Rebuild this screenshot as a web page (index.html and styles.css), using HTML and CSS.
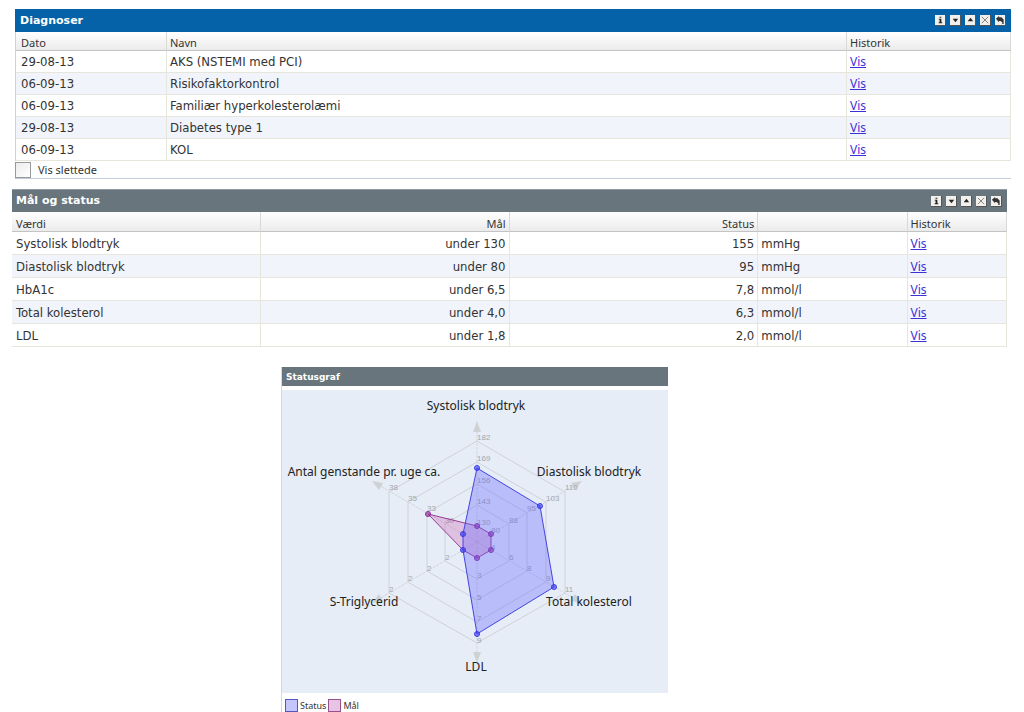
FILE: index.html
```html
<!DOCTYPE html>
<html lang="da">
<head>
<meta charset="utf-8">
<meta name="viewport" content="width=device-width, initial-scale=1">
<title>Diagnoser og status</title>
<link rel="stylesheet" href="styles.css">
</head>
<body>
<svg class="symbols" aria-hidden="true">
  <symbol id="i-info" viewBox="0 0 11 11"><path d="M5 2h2v1H5zM4 4h3v4h1v1H4V8h1V5H4z" fill="#222"/></symbol>
  <symbol id="i-down" viewBox="0 0 11 11"><path d="M3 4h6L6 8z" fill="#222"/></symbol>
  <symbol id="i-up" viewBox="0 0 11 11"><path d="M3 7h6L6 3z" fill="#222"/></symbol>
  <symbol id="i-close" viewBox="0 0 11 11"><path d="M2 2l7 7M9 2L2 9" stroke="#777" fill="none"/></symbol>
  <symbol id="i-back" viewBox="0 0 11 11"><path d="M1 4L4.500 1v1.500H7L9.500 5v5H8V8L6 6.500H4.500V8z" fill="#333"/></symbol>
</svg>

<main class="page">
  <section class="panel diagnoses">
    <header class="bar bar-blue">
      <h2>Diagnoser</h2>
      <div class="tools">
        <button type="button" aria-label="Info"><svg><use href="#i-info"/></svg></button>
        <button type="button" aria-label="Ned"><svg><use href="#i-down"/></svg></button>
        <button type="button" aria-label="Op"><svg><use href="#i-up"/></svg></button>
        <button type="button" aria-label="Luk"><svg><use href="#i-close"/></svg></button>
        <button type="button" aria-label="Tilbage"><svg><use href="#i-back"/></svg></button>
      </div>
    </header>
    <table>
      <colgroup><col class="d-date"><col class="d-name"><col class="d-hist"></colgroup>
      <thead><tr><th>Dato</th><th>Navn</th><th>Historik</th></tr></thead>
      <tbody>
        <tr><td>29-08-13</td><td>AKS (NSTEMI med PCI)</td><td><a href="#">Vis</a></td></tr>
        <tr><td>06-09-13</td><td>Risikofaktorkontrol</td><td><a href="#">Vis</a></td></tr>
        <tr><td>06-09-13</td><td>Familiær hyperkolesterolæmi</td><td><a href="#">Vis</a></td></tr>
        <tr><td>29-08-13</td><td>Diabetes type 1</td><td><a href="#">Vis</a></td></tr>
        <tr><td>06-09-13</td><td>KOL</td><td><a href="#">Vis</a></td></tr>
      </tbody>
    </table>
    <label class="deleted"><input type="checkbox">Vis slettede</label>
  </section>

  <section class="panel goals">
    <header class="bar bar-grey">
      <h2>Mål og status</h2>
      <div class="tools">
        <button type="button" aria-label="Info"><svg><use href="#i-info"/></svg></button>
        <button type="button" aria-label="Ned"><svg><use href="#i-down"/></svg></button>
        <button type="button" aria-label="Op"><svg><use href="#i-up"/></svg></button>
        <button type="button" aria-label="Luk"><svg><use href="#i-close"/></svg></button>
        <button type="button" aria-label="Tilbage"><svg><use href="#i-back"/></svg></button>
      </div>
    </header>
    <table>
      <colgroup><col class="g-value"><col class="g-goal"><col class="g-status"><col class="g-unit"><col class="g-hist"></colgroup>
      <thead><tr><th>Værdi</th><th class="num">Mål</th><th class="num">Status</th><th></th><th>Historik</th></tr></thead>
      <tbody>
        <tr><td>Systolisk blodtryk</td><td class="num">under 130</td><td class="num">155</td><td>mmHg</td><td><a href="#">Vis</a></td></tr>
        <tr><td>Diastolisk blodtryk</td><td class="num">under 80</td><td class="num">95</td><td>mmHg</td><td><a href="#">Vis</a></td></tr>
        <tr><td>HbA1c</td><td class="num">under 6,5</td><td class="num">7,8</td><td>mmol/l</td><td><a href="#">Vis</a></td></tr>
        <tr><td>Total kolesterol</td><td class="num">under 4,0</td><td class="num">6,3</td><td>mmol/l</td><td><a href="#">Vis</a></td></tr>
        <tr><td>LDL</td><td class="num">under 1,8</td><td class="num">2,0</td><td>mmol/l</td><td><a href="#">Vis</a></td></tr>
      </tbody>
    </table>
  </section>

  <section class="graph">
    <header class="bar bar-small"><h2>Statusgraf</h2></header>
    <svg class="radar" viewBox="0 0 386 303" role="img" aria-label="Statusgraf">
      <g class="grid">
        <path d="M195 51L283 102V203L195 253L107 203V102Z"/>
        <path d="M195 72L264 112V192L195 232L126 192V112Z"/>
        <path d="M195 94L245 123V181L195 210L145 181V123Z"/>
        <path d="M195 115L227 134V171L195 189L163 171V134Z"/>
        <path class="axis" d="M195 152V36M195 152L295 94M195 152L295 210M195 152V268M195 152L95 210M195 152L95 94"/>
      </g>
      <g class="arrows">
        <path d="M195 31l4 11h-8z"/><path d="M195 273l4-11h-8z"/>
        <path d="M300 91l-11 2 4 7z"/><path d="M300 213l-11-2 4-7z"/>
        <path d="M90 91l11 2-4 7z"/><path d="M90 213l11-2-4-7z"/>
      </g>
      <g class="ticks">
        <text x="195" y="50">182</text><text x="195" y="71">169</text><text x="195" y="93">156</text><text x="195" y="114">143</text><text x="195" y="135">130</text>
        <text x="283" y="100">110</text><text x="264" y="111">103</text><text x="245" y="121">95</text><text x="227" y="133">88</text><text x="209" y="143">80</text>
        <text x="283" y="202">11</text><text x="264" y="191">9</text><text x="245" y="181">8</text><text x="227" y="170">6</text><text x="209" y="160">4</text>
        <text x="195" y="253">9</text><text x="195" y="231">7</text><text x="195" y="210">5</text><text x="195" y="188">3</text>
        <text x="107" y="202">2</text><text x="126" y="191">2</text><text x="145" y="181">2</text><text x="163" y="170">2</text>
        <text x="107" y="100">38</text><text x="126" y="111">35</text><text x="145" y="121">33</text><text x="163" y="133">30</text>
      </g>
      <g class="goal">
        <path d="M195 136L209 144V160L195 168L181 160L146 124Z"/>
        <circle cx="195" cy="136" r="2.500"/><circle cx="209" cy="144" r="2.500"/><circle cx="209" cy="160" r="2.500"/><circle cx="195" cy="168" r="2.500"/><circle cx="146" cy="124" r="2.500"/>
      </g>
      <g class="status">
        <path d="M195 78L258 116L272 197L195 244L181 160V144Z"/>
        <circle cx="195" cy="78" r="2.500"/><circle cx="258" cy="116" r="2.500"/><circle cx="272" cy="197" r="2.500"/><circle cx="195" cy="244" r="2.500"/><circle cx="181" cy="160" r="2.500"/><circle cx="181" cy="144" r="2.500"/>
      </g>
      <g class="names">
        <text x="194" y="20">Systolisk blodtryk</text>
        <text x="307" y="86">Diastolisk blodtryk</text>
        <text x="307" y="216">Total kolesterol</text>
        <text x="194" y="281">LDL</text>
        <text x="82" y="216">S-Triglycerid</text>
        <text x="82" y="86">Antal genstande pr. uge ca.</text>
      </g>
    </svg>
    <div class="legend">
      <span class="swatch swatch-status"></span><span>Status</span>
      <span class="swatch swatch-goal"></span><span>Mål</span>
    </div>
  </section>
</main>
</body>
</html>
```
FILE: styles.css
```css
* { box-sizing: border-box; }
body { margin: 0; background: #fff; color: #333; font-family: "DejaVu Sans Condensed", "DejaVu Sans", sans-serif; font-size: 13px; }
.symbols { position: absolute; width: 0; height: 0; }
.page { padding: 9px 12px 0; }

.bar { display: flex; align-items: center; justify-content: space-between; height: 23px; padding: 0 5px; color: #fff; }
.bar h2 { margin: 0; font-family: "DejaVu Sans", sans-serif; font-size: 11px; line-height: 16px; font-weight: bold; }
.bar-blue { background: #0562a8; }
.bar-grey { background: #68757d; padding: 0 5px 0 4px; border-top: 1px solid #8e9ba5; }
.bar-small { background: #68757d; height: 19px; padding: 0 4px; }
.bar-small h2 { font-size: 9px; }

.tools { display: flex; gap: 4px; }
.tools button { width: 11px; height: 11px; padding: 0; border: 1px solid #555; border-width: 0 1px 1px 0; background: #f1f0ec; display: block; }
.tools svg { display: block; width: 10px; height: 10px; }

table { width: 100%; table-layout: fixed; border-collapse: separate; border-spacing: 0; }
th { height: 19px; padding: 3px 3px 0; border-right: 1px solid #d9d9d9; border-bottom: 1px solid #c4c4c4; background: linear-gradient(#fff, #ebebeb); font-family: "Noto Sans", sans-serif; font-size: 11px; line-height: 15px; font-weight: normal; text-align: left; }
td { height: 22px; padding: 1px 3px 0; border-right: 1px solid #e6e6dc; border-bottom: 1px solid #e6e6dc; line-height: 16px; }
tbody tr:nth-child(even) { background: #f1f4fa; }
.num { text-align: right; }
a { color: #3a32d8; font-family: "Noto Sans", sans-serif; font-size: 12px; text-decoration: underline; }

.diagnoses { margin-left: 3px; margin-right: 1px; border-bottom: 1px solid #c3ccd6; }
.diagnoses table { border-left: 1px solid #c9d4de; }
.diagnoses th:first-child, .diagnoses td:first-child { padding-left: 5px; }
.d-date { width: 151px; }
.d-hist { width: 164px; }
.deleted { display: flex; align-items: center; gap: 7px; height: 17px; font-family: "Noto Sans", sans-serif; font-size: 11px; line-height: 15px; }
.deleted input { appearance: none; width: 16px; height: 16px; margin: 0; border: 1px solid #999; background: linear-gradient(135deg, #ececec, #fff); }

.goals { margin-top: 10px; margin-right: 5px; }
.goals th { height: 20px; }
.goals td { height: 23px; padding-top: 2px; }
.goals th:first-child, .goals td:first-child { padding-left: 4px; }
.g-value { width: 25%; }
.g-goal { width: 25%; }
.g-status { width: 25%; }
.g-unit { width: 15%; }
.g-hist { width: 10%; }

.graph { width: 38.7%; margin: 20px auto 0 26.9%; border-left: 1px solid #d5dae0; }
.radar { display: block; width: 100%; margin-top: 4px; background: #e6edf6; font-family: "Noto Sans", sans-serif; }
.grid path { fill: none; stroke: #cfd2d8; stroke-width: 1; }
.grid .axis { stroke: #d3d6dc; stroke-dasharray: 3 1; }
.arrows { fill: #cfd2d5; }
.ticks { fill: #a5a7ae; font-family: "Liberation Sans", sans-serif; font-size: 8px; }
.names { fill: #222; font-size: 12px; text-anchor: middle; }
.goal path { fill: rgba(200, 60, 160, .25); stroke: #9a3c98; }
.goal circle { fill: rgba(150, 40, 160, .6); stroke: #8a2c98; }
.status path { fill: rgba(100, 100, 255, .35); stroke: #4545e0; }
.status circle { fill: rgba(60, 60, 240, .6); stroke: #3c3ce0; }

.legend { display: flex; align-items: center; gap: 2px; padding: 6px 3px 0; font-family: "Noto Sans", sans-serif; font-size: 9px; line-height: 13px; }
.swatch { width: 13px; height: 13px; border: 1px solid #5555c8; background: #c3c5fb; }
.swatch-goal { border-color: #98508f; background: #e8c4e4; }
```
